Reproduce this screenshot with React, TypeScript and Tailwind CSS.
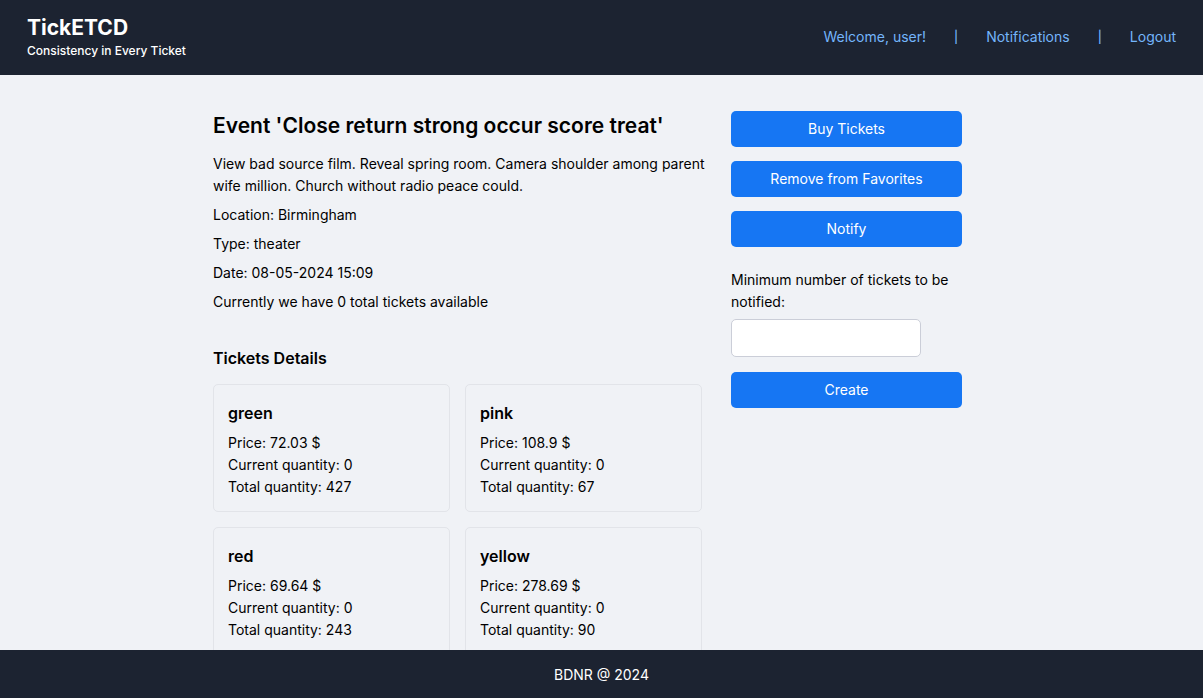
const tickets = [
  { name: "green", price: "72.03", current: 0, total: 427 },
  { name: "pink", price: "108.9", current: 0, total: 67 },
  { name: "red", price: "69.64", current: 0, total: 243 },
  { name: "yellow", price: "278.69", current: 0, total: 90 },
];

const actionClass =
  "h-9 w-full rounded-[5px] bg-[#1676f3] text-center text-white hover:bg-blue-700";

function Header() {
  return (
    <header className="flex h-[75px] shrink-0 items-center justify-between bg-[#1c2331] px-[27px] pb-0.5 text-white">
      <div>
        <a href="#" className="block text-[21px] leading-7 font-bold">
          TickETCD
        </a>
        <p className="text-xs leading-[18px] font-medium">
          Consistency in Every Ticket
        </p>
      </div>
      <nav className="flex items-center gap-7 text-[#74b5fb]">
        <a href="#profile">Welcome, user!</a>
        <span className="text-xs font-medium">|</span>
        <a href="#notifications">Notifications</a>
        <span className="text-xs font-medium">|</span>
        <a href="#logout">Logout</a>
      </nav>
    </header>
  );
}

function TicketCard({ ticket }: { ticket: (typeof tickets)[number] }) {
  return (
    <article className="rounded-[5px] border border-[#e2e4e9] px-[14px] pt-[14px] pb-[13px]">
      <h4 className="mb-[5px] text-base leading-7 font-semibold">
        {ticket.name}
      </h4>
      <p>Price: {ticket.price} $</p>
      <p>Current quantity: {ticket.current}</p>
      <p>Total quantity: {ticket.total}</p>
    </article>
  );
}

export default function App() {
  return (
    <div className="flex h-screen flex-col bg-[#f0f2f6] font-['Inter',sans-serif] text-sm leading-[22px] text-black">
      <Header />
      <main className="min-h-0 flex-1 overflow-hidden">
        <div className="mx-auto flex w-full max-w-[777px] items-start gap-[29px] pt-9 pr-7">
          <section className="min-w-0 flex-1">
            <h2 className="mb-3 text-[21px] leading-[30px] font-semibold">
              Event 'Close return strong occur score treat'
            </h2>
            <div className="-mr-4 flex flex-col gap-[7px]">
              <p>
                View bad source film. Reveal spring room. Camera shoulder among
                parent wife million. Church without radio peace could.
              </p>
              <p>Location: Birmingham</p>
              <p>Type: theater</p>
              <p>Date: 08-05-2024 15:09</p>
              <p>Currently we have 0 total tickets available</p>
            </div>
            <h3 className="mt-[31px] mb-3 text-base leading-7 font-semibold">
              Tickets Details
            </h3>
            <div className="grid grid-cols-2 gap-[15px]">
              {tickets.map((ticket) => (
                <TicketCard key={ticket.name} ticket={ticket} />
              ))}
            </div>
          </section>
          <aside className="w-[231px] shrink-0">
            <div className="flex flex-col gap-[14px]">
              <button type="button" className={actionClass}>
                Buy Tickets
              </button>
              <button type="button" className={actionClass}>
                Remove from Favorites
              </button>
              <button type="button" className={actionClass}>
                Notify
              </button>
            </div>
            <form className="mt-[22px]" onSubmit={(e) => e.preventDefault()}>
              <label htmlFor="minimum" className="mb-1.5 block">
                Minimum number of tickets to be notified:
              </label>
              <input
                id="minimum"
                type="text"
                inputMode="numeric"
                className="mb-[15px] block h-[38px] w-[190px] rounded-[5px] border border-[#cbced8] bg-white px-2"
              />
              <button type="submit" className={actionClass}>
                Create
              </button>
            </form>
          </aside>
        </div>
      </main>
      <footer className="flex h-12 shrink-0 items-center justify-center bg-[#1c2331] pt-0.5 text-white">
        BDNR @ 2024
      </footer>
    </div>
  );
}
